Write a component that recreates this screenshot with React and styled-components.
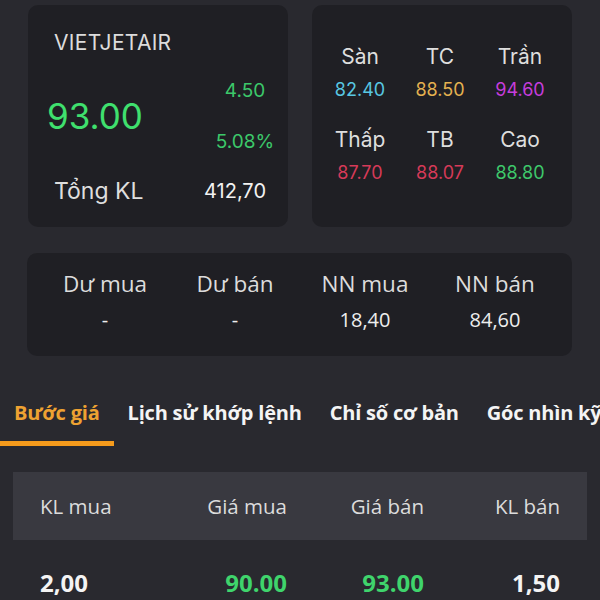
import styled, { createGlobalStyle } from "styled-components";

const GlobalStyle = createGlobalStyle`
    body{
        margin: 0;
        background-color: #29292f;
        font-family: Inter, Roboto, sans-serif;
    }
`;

const quote = {
    symbol: "VIETJETAIR",
    price: "93.00",
    change: "4.50",
    percent: "5.08%",
    total: "412,70",
};

const levels = [
    { label: "Sàn", value: "82.40", color: "#58c7e2" },
    { label: "TC", value: "88.50", color: "#e4b150" },
    { label: "Trần", value: "94.60", color: "#c53ddc" },
    { label: "Thấp", value: "87.70", color: "#d53a58" },
    { label: "TB", value: "88.07", color: "#d53a58" },
    { label: "Cao", value: "88.80", color: "#3ec86b" },
];

const flows = [
    { label: "Dư mua", value: "-" },
    { label: "Dư bán", value: "-" },
    { label: "NN mua", value: "18,40" },
    { label: "NN bán", value: "84,60" },
];

const tabs = ["Bước giá", "Lịch sử khớp lệnh", "Chỉ số cơ bản", "Góc nhìn kỹ thuật"];

export default function App(){
    return(
        <Page>
            <GlobalStyle />
            <TopRow>
                <Card>
                    <Symbol>{quote.symbol}</Symbol>
                    <PriceRow>
                        <BigPrice>{quote.price}</BigPrice>
                        <ChangeBox>
                            <span>{quote.change}</span>
                            <span>{quote.percent}</span>
                        </ChangeBox>
                    </PriceRow>
                    <TotalRow>
                        <span>Tổng KL</span>
                        <strong>{quote.total}</strong>
                    </TotalRow>
                </Card>

                <LevelCard>
                    {levels.map(e => (
                        <Cell key={e.label}>
                            <Label>{e.label}</Label>
                            <Value color={e.color}>{e.value}</Value>
                        </Cell>
                    ))}
                </LevelCard>
            </TopRow>

            <FlowCard>
                {flows.map(e => (
                    <FlowCell key={e.label}>
                        <span>{e.label}</span>
                        <strong>{e.value}</strong>
                    </FlowCell>
                ))}
            </FlowCard>

            <Tabs>
                {tabs.map((t, i) => (
                    <Tab key={t} active={i === 0}>{t}</Tab>
                ))}
            </Tabs>

            <Table>
                <HeadRow>
                    <span>KL mua</span>
                    <span>Giá mua</span>
                    <span>Giá bán</span>
                    <span>KL bán</span>
                </HeadRow>
                <BodyRow>
                    <span>2,00</span>
                    <Green>90.00</Green>
                    <Green>93.00</Green>
                    <span>1,50</span>
                </BodyRow>
            </Table>
        </Page>
    );
}

/* ------------------- Estilização ------------------- */
const Page = styled.div`
    width: 600px;
    height: 600px;
    overflow: hidden;
    padding-top: 5px;
    box-sizing: border-box;
    color: #e6e6e6;
`;

const TopRow = styled.div`
    margin: 0 28px;
    display: grid;
    grid-template-columns: 260px 260px;
    gap: 24px;
`;

const Card = styled.section`
    height: 222px;
    box-sizing: border-box;
    padding: 25px 0 0 26px;
    border-radius: 10px;
    background-color: #1f1f24;
    display: flex;
    flex-direction: column;
`;

const Symbol = styled.div`
    font-size: 21px;
    line-height: 26px;
    letter-spacing: 0.3px;
    color: #dcdcdc;
`;

const PriceRow = styled.div`
    display: flex;
    justify-content: space-between;
    align-items: center;
    padding-right: 12px;
    margin-top: 23px;
`;

const BigPrice = styled.div`
    font-size: 35px;
    color: #3fe06e;
    margin-left: -7px;
`;

const ChangeBox = styled.div`
    width: 62px;
    display: flex;
    flex-direction: column;
    align-items: center;
    gap: 28px;
    font-size: 19px;
    line-height: 23px;
    color: #3cc86a;
`;

const TotalRow = styled.div`
    display: flex;
    align-items: center;
    justify-content: space-between;
    padding-right: 22px;
    margin-top: 24px;

    span{
        font-size: 23px;
        color: #dedede;
    }

    strong{
        font-weight: 400;
        font-size: 20px;
        color: #f2f2f2;
    }
`;

const LevelCard = styled.section`
    height: 222px;
    box-sizing: border-box;
    padding: 39px 12px 0 8px;
    border-radius: 10px;
    background-color: #1f1f24;
    display: grid;
    grid-template-columns: repeat(3, 80px);
    grid-auto-rows: 83px;
    align-content: start;
`;

const Cell = styled.div`
    display: flex;
    flex-direction: column;
    align-items: center;
    gap: 9px;
`;

const Label = styled.span`
    font-size: 21px;
    line-height: 26px;
    color: #dedede;
`;

const Value = styled.span`
    font-size: 18px;
    line-height: 22px;
    color: ${props => props.color};
`;

const FlowCard = styled.section`
    margin: 26px 28px 0 27px;
    height: 103px;
    box-sizing: border-box;
    padding: 16px 12px 0 13px;
    border-radius: 10px;
    background-color: #1f1f24;
    display: grid;
    grid-template-columns: repeat(4, 130px);
    font-family: "Open Sans", sans-serif;
`;

const FlowCell = styled.div`
    display: flex;
    flex-direction: column;
    align-items: center;
    gap: 9px;

    span{
        font-size: 22.5px;
        line-height: 29px;
        color: #dcdcdc;
    }

    strong{
        font-weight: 400;
        font-size: 20px;
        line-height: 25px;
        color: #eeeeee;
    }
`;

const Tabs = styled.nav`
    margin-top: 31px;
    display: flex;
    white-space: nowrap;
    font-family: "Open Sans", sans-serif;
`;

const Tab = styled.div`
    padding: 12px 14px 15px;
    font-size: 20px;
    line-height: 27px;
    font-weight: 700;
    letter-spacing: -0.2px;
    color: ${props => props.active ? "#eea232" : "#f4f4f4"};
    border-bottom: 5px solid ${props => props.active ? "#f59b1c" : "transparent"};
`;

const Table = styled.div`
    margin: 26px 13px 0;
    font-family: "Open Sans", sans-serif;
`;

const HeadRow = styled.div`
    height: 68px;
    padding: 0 27px;
    background-color: #393940;
    display: grid;
    grid-template-columns: 1fr 136px 137px 136px;
    align-items: center;
    font-size: 20.5px;
    color: #dcdcdc;

    span:not(:first-child){
        text-align: right;
    }
`;

const BodyRow = styled.div`
    padding: 26px 27px 0;
    display: grid;
    grid-template-columns: 1fr 136px 137px 136px;
    font-size: 24px;
    line-height: 33px;
    font-weight: 700;
    color: #f4f4f4;

    span:not(:first-child){
        text-align: right;
    }
`;

const Green = styled.span`
    color: #3fd46c;
`;
